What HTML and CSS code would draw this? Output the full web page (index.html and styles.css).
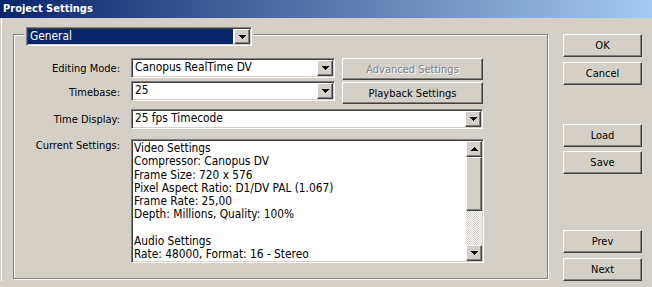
FILE: index.html
```html
<!DOCTYPE html>
<html>
<head>
<meta charset="utf-8">
<title>Project Settings</title>
<link rel="stylesheet" href="styles.css">
</head>
<body>
<div class="window">
  <div class="titlebar">Project Settings</div>
  <div class="client">
    <div class="group">
      <div class="legend">
        <div class="combo combo-legend">
          <span class="value selected">General</span>
          <span class="drop"><svg width="7" height="4" viewBox="0 0 7 4" shape-rendering="crispEdges"><path d="M0 0h7v1H0zM1 1h5v1H1zM2 2h3v1H2zM3 3h1v1H3z" fill="#000"/></svg></span>
        </div>
      </div>
      <div class="form">
        <div class="lbl r1">Editing Mode:</div>
        <div class="combo r1">
          <span class="value">Canopus RealTime DV</span>
          <span class="drop"><svg width="7" height="4" viewBox="0 0 7 4" shape-rendering="crispEdges"><path d="M0 0h7v1H0zM1 1h5v1H1zM2 2h3v1H2zM3 3h1v1H3z" fill="#000"/></svg></span>
        </div>
        <div class="btn disabled r1">Advanced Settings</div>

        <div class="lbl r2">Timebase:</div>
        <div class="combo r2">
          <span class="value">25</span>
          <span class="drop"><svg width="7" height="4" viewBox="0 0 7 4" shape-rendering="crispEdges"><path d="M0 0h7v1H0zM1 1h5v1H1zM2 2h3v1H2zM3 3h1v1H3z" fill="#000"/></svg></span>
        </div>
        <div class="btn r2">Playback Settings</div>

        <div class="lbl r3">Time Display:</div>
        <div class="combo wide r3">
          <span class="value">25 fps Timecode</span>
          <span class="drop"><svg width="7" height="4" viewBox="0 0 7 4" shape-rendering="crispEdges"><path d="M0 0h7v1H0zM1 1h5v1H1zM2 2h3v1H2zM3 3h1v1H3z" fill="#000"/></svg></span>
        </div>

        <div class="lbl lbl-top r4">Current Settings:</div>
        <div class="listbox wide r4">
          <div class="list-text">
            <div>Video Settings</div>
            <div>Compressor: Canopus DV</div>
            <div>Frame Size: 720 x 576</div>
            <div>Pixel Aspect Ratio: D1/DV PAL (1.067)</div>
            <div>Frame Rate: 25,00</div>
            <div>Depth: Millions, Quality: 100%</div>
            <div>&nbsp;</div>
            <div>Audio Settings</div>
            <div>Rate: 48000, Format: 16 - Stereo</div>
          </div>
          <div class="scrollbar">
            <span class="sbtn"><svg width="7" height="4" viewBox="0 0 7 4" shape-rendering="crispEdges"><path d="M3 0h1v1H3zM2 1h3v1H2zM1 2h5v1H1zM0 3h7v1H0z" fill="#000"/></svg></span>
            <span class="thumb"></span>
            <span class="track"></span>
            <span class="sbtn"><svg width="7" height="4" viewBox="0 0 7 4" shape-rendering="crispEdges"><path d="M0 0h7v1H0zM1 1h5v1H1zM2 2h3v1H2zM3 3h1v1H3z" fill="#000"/></svg></span>
          </div>
        </div>
      </div>
    </div>
    <div class="buttons">
      <div class="btn side">OK</div>
      <div class="btn side gap-s">Cancel</div>
      <div class="btn side gap-l">Load</div>
      <div class="btn side gap-s2">Save</div>
      <div class="btn side gap-xl">Prev</div>
      <div class="btn side gap-s">Next</div>
    </div>
  </div>
</div>
</body>
</html>
```
FILE: styles.css
```css
html, body {
  margin: 0;
  padding: 0;
  background: #d4d0c8;
}
body {
  width: 652px;
  height: 287px;
  overflow: hidden;
  font-family: "DejaVu Sans Condensed", "Liberation Sans", sans-serif;
  font-size: 11px;
  color: #000;
}
.window {
  display: flex;
  flex-direction: column;
  height: 287px;
}
.titlebar {
  height: 18px;
  line-height: 18px;
  padding-left: 3px;
  font-weight: bold;
  color: #fff;
  background: linear-gradient(to right, #0a246a 0%, #a6caf0 100%);
}
.client {
  display: flex;
  padding-left: 13px;
  box-shadow: inset 1px 0 #d4d0c8, inset 2px 0 #fff;
}
.group {
  margin-top: 16px;
  width: 533px;
  height: 243px;
  border: 1px solid #808080;
  box-shadow: inset 1px 1px #fff, 1px 1px #fff;
  display: flex;
  flex-direction: column;
}
.legend {
  align-self: flex-start;
  margin: -8px 0 0 10px;
  padding: 0 2px;
  background: #d4d0c8;
}
.combo {
  height: 16px;
  border: 1px solid;
  border-color: #808080 #fff #fff #808080;
  box-shadow: inset 1px 1px #404040, inset -1px -1px #d4d0c8;
  padding: 1px;
  background: #fff;
  display: flex;
  align-items: stretch;
}
.combo-legend {
  width: 222px;
  height: 15px;
}
.value {
  flex: 1;
  padding-left: 2px;
  line-height: 15px;
  font-size: 11.8px;
  white-space: nowrap;
  overflow: hidden;
}
.value.selected {
  background: #0a246a;
  color: #fff;
  margin-right: 1px;
}
.drop, .sbtn {
  width: 14px;
  border: 1px solid;
  border-color: #fff #404040 #404040 #fff;
  box-shadow: inset -1px -1px #808080;
  background: #d4d0c8;
  display: flex;
  align-items: center;
  justify-content: center;
}
.drop svg, .sbtn svg { display: block; }
.form {
  margin-top: 12px;
  display: grid;
  grid-template-columns: 110px 204px 141px;
  grid-template-rows: 22px 22px 23px 132px;
  column-gap: 7px;
  row-gap: 2px;
}
.r1 { grid-row: 1; }
.r2 { grid-row: 2; }
.r3 { grid-row: 3; }
.r4 { grid-row: 4; }
.lbl {
  grid-column: 1;
  text-align: right;
  padding-right: 4px;
  align-self: center;
  white-space: nowrap;
}
.r1.lbl { margin-top: -1px; }
.r2.lbl { margin-top: -2px; }
.r3.lbl { align-self: end; margin-bottom: 3px; }
.lbl-top { align-self: start; margin-top: 8px; }
.combo.r1, .combo.r2 { grid-column: 2; align-self: start; }
.combo.r2 { margin-top: -1px; }
.wide { grid-column: 2 / 4; }
.combo.r3 { align-self: end; }
.btn {
  border: 1px solid;
  border-color: #fff #404040 #404040 #fff;
  box-shadow: inset -1px -1px #808080;
  background: #d4d0c8;
  display: flex;
  align-items: center;
  justify-content: center;
  white-space: nowrap;
}
.btn.r1, .btn.r2 { grid-column: 3; height: 20px; }
.btn.disabled {
  color: #808080;
  text-shadow: 1px 1px #fff;
}
.listbox {
  align-self: end;
  height: 120px;
  border: 1px solid;
  border-color: #808080 #fff #fff #808080;
  box-shadow: inset 1px 1px #404040, inset -1px -1px #d4d0c8;
  padding: 1px;
  background: #fff;
  display: flex;
  margin-right: -1px;
}
.list-text {
  flex: 1;
  padding-left: 1px;
  padding-top: 1px;
  line-height: 13.3px;
  font-size: 11.8px;
  white-space: nowrap;
  overflow: hidden;
}
.scrollbar {
  width: 16px;
  display: flex;
  flex-direction: column;
}
.sbtn {
  width: 14px;
  height: 14px;
  flex: none;
}
.thumb {
  height: 52px;
  flex: none;
  border: 1px solid;
  border-color: #fff #404040 #404040 #fff;
  box-shadow: inset -1px -1px #808080;
  background: #d4d0c8;
}
.track {
  flex: 1;
  background-color: #fff;
  background-image: repeating-conic-gradient(#d4d0c8 0 25%, #fff 0 50%);
  background-size: 2px 2px;
}
.buttons {
  margin-left: 15px;
  padding-top: 16px;
  display: flex;
  flex-direction: column;
  width: 79px;
}
.btn.side {
  height: 21px;
  box-sizing: content-box;
}
.gap-s { margin-top: 5px; }
.gap-s2 { margin-top: 4px; }
.gap-l { margin-top: 39px; }
.gap-xl { margin-top: 56px; }
```
